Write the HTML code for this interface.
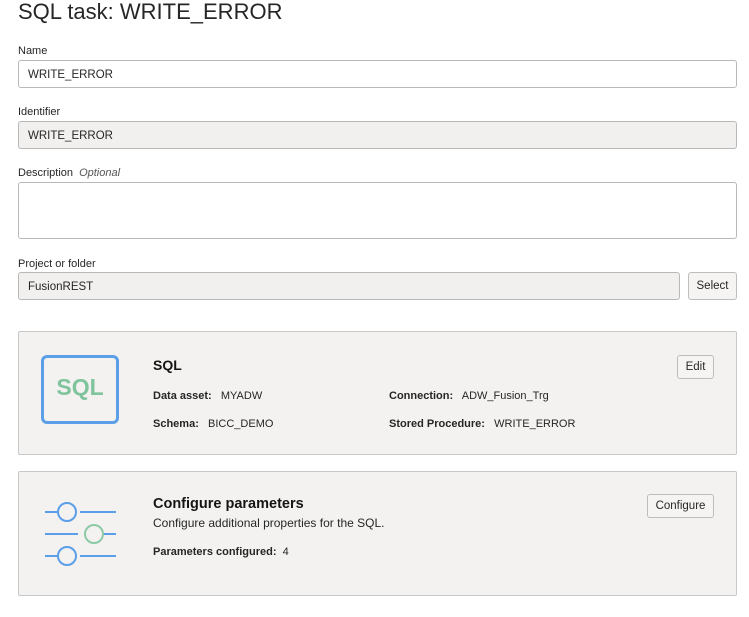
<!DOCTYPE html>
<html><head><style>
body{margin:0;width:749px;height:617px;background:#fff;font-family:"Liberation Sans",Arial,sans-serif;color:#161513;position:relative;overflow:hidden}
.a{position:absolute}
.lbl{font-size:11px;color:#262626}
.inp{position:absolute;box-sizing:border-box;border:1px solid #b8b8b8;border-radius:3px;font-size:11.5px;padding-left:9px;display:flex;align-items:center;color:#262626;padding-top:1px}
.g{background:#f1f0ef}
.btn{position:absolute;box-sizing:border-box;border:1px solid #bdbdbd;border-radius:3px;background:#f5f4f2;font-size:11.5px;display:flex;align-items:center;justify-content:center;color:#262626}
.card{position:absolute;left:18px;width:719px;box-sizing:border-box;border:1px solid #c8c8c8;background:#f3f2f1;border-radius:2px}
.t{font-size:11px;color:#262626}
.t b{font-weight:bold}
</style></head><body>
<div class="a" style="left:18px;top:-1px;font-size:22px;color:#262626">SQL task: WRITE_ERROR</div>
<div class="a lbl" style="left:18px;top:45px">Name</div>
<div class="inp" style="left:18px;top:60px;width:719px;height:28px">WRITE_ERROR</div>
<div class="a lbl" style="left:18px;top:106px">Identifier</div>
<div class="inp g" style="left:18px;top:121px;width:719px;height:28px">WRITE_ERROR</div>
<div class="a lbl" style="left:18px;top:167px">Description <i style="color:#555;margin-left:3px">Optional</i></div>
<div class="inp" style="left:18px;top:182px;width:719px;height:57px"></div>
<div class="a lbl" style="left:18px;top:258px">Project or folder</div>
<div class="inp g" style="left:18px;top:272px;width:662px;height:28px">FusionREST</div>
<div class="btn" style="left:688px;top:272px;width:49px;height:28px">Select</div>

<div class="card" style="top:331px;height:124px"></div>
<div class="a" style="left:41px;top:355px;width:78px;height:69px;box-sizing:border-box;border:3px solid #5a9fe8;border-radius:6px;display:flex;align-items:center;justify-content:center;color:#7fc49c;font-weight:bold;font-size:23px;padding-bottom:4px">SQL</div>
<div class="a" style="left:153px;top:357px;font-size:14px;font-weight:bold">SQL</div>
<div class="a t" style="left:153px;top:390px"><b>Data asset:</b>&nbsp;&nbsp; MYADW</div>
<div class="a t" style="left:153px;top:418px"><b>Schema:</b>&nbsp;&nbsp; BICC_DEMO</div>
<div class="a t" style="left:389px;top:390px"><b>Connection:</b>&nbsp;&nbsp; ADW_Fusion_Trg</div>
<div class="a t" style="left:389px;top:418px"><b>Stored Procedure:</b>&nbsp;&nbsp; WRITE_ERROR</div>
<div class="btn" style="left:677px;top:355px;width:37px;height:24px">Edit</div>

<div class="card" style="top:471px;height:125px"></div>
<svg class="a" style="left:40px;top:500px" width="80" height="70" viewBox="40 500 80 70">
<g stroke="#5a9fe8" stroke-width="2" fill="none">
<line x1="45" y1="512" x2="58" y2="512"/><circle cx="67" cy="512" r="9"/><line x1="80" y1="512" x2="116" y2="512"/>
<line x1="45" y1="534" x2="78" y2="534"/><line x1="103" y1="534" x2="116" y2="534"/>
<line x1="45" y1="556" x2="58" y2="556"/><circle cx="67" cy="556" r="9"/><line x1="80" y1="556" x2="116" y2="556"/>
</g>
<circle cx="94" cy="534" r="9" stroke="#8ccaa6" stroke-width="2" fill="none"/>
</svg>
<div class="a" style="left:153px;top:496px;font-size:14.5px;font-weight:bold">Configure parameters</div>
<div class="a t" style="left:153px;top:516px;font-size:12px">Configure additional properties for the SQL.</div>
<div class="a t" style="left:153px;top:546px"><b>Parameters configured:</b>&nbsp; 4</div>
<div class="btn" style="left:647px;top:494px;width:67px;height:24px">Configure</div>
</body></html>
